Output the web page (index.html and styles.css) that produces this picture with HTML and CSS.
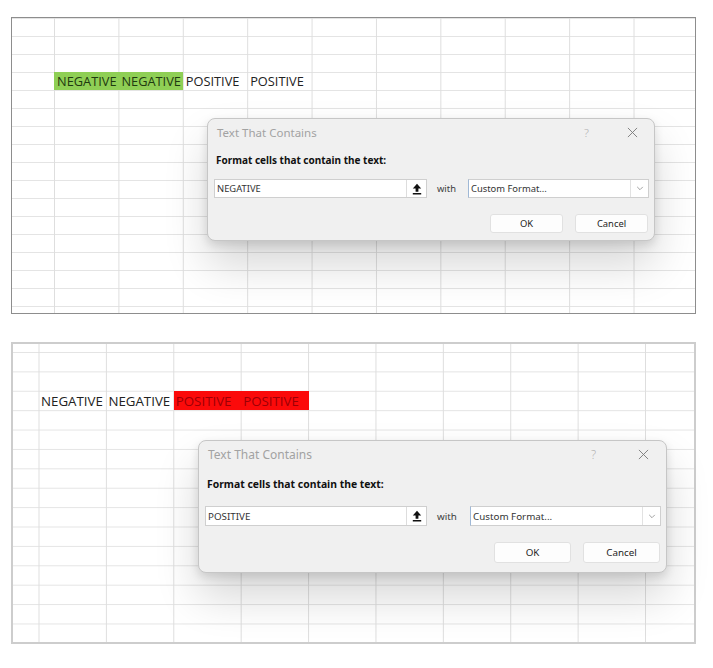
FILE: index.html
```html
<!DOCTYPE html>
<html lang="en">
<head>
<meta charset="utf-8">
<title>Text That Contains</title>
<link rel="stylesheet" href="styles.css">
</head>
<body>
<main class="page">
  <section class="sheet sheet--top">
    <div class="cells">
      <div class="cell cell--green">NEGATIVE</div>
      <div class="cell cell--green">NEGATIVE</div>
      <div class="cell">POSITIVE</div>
      <div class="cell">POSITIVE</div>
    </div>
    <div class="dialog dialog--top">
      <div class="titlebar">
        <span class="title">Text That Contains</span>
        <span class="help">?</span>
        <svg class="close" viewBox="0 0 12 12"><path d="M1 1 L11 11 M11 1 L1 11"/></svg>
      </div>
      <div class="label">Format cells that contain the text:</div>
      <div class="fields">
        <div class="input">
          <span class="input-text">NEGATIVE</span>
          <span class="collapse"><svg viewBox="0 0 10 12"><path class="fill" d="M5 0.8 L9.2 5.6 H6.4 V8.8 H3.6 V5.6 H0.8 Z"/><rect class="fill" x="0.8" y="10" width="8.4" height="1.5"/></svg></span>
        </div>
        <span class="with">with</span>
        <div class="select">
          <span class="select-text">Custom Format...</span>
          <span class="chev"><svg viewBox="0 0 10 6"><path d="M1.5 1 L5 4.5 L8.5 1"/></svg></span>
        </div>
      </div>
      <div class="buttons">
        <button class="btn">OK</button>
        <button class="btn">Cancel</button>
      </div>
    </div>
  </section>

  <section class="sheet sheet--bottom">
    <div class="cells">
      <div class="cell">NEGATIVE</div>
      <div class="cell">NEGATIVE</div>
      <div class="cell cell--red">POSITIVE</div>
      <div class="cell cell--red">POSITIVE</div>
    </div>
    <div class="dialog dialog--bottom">
      <div class="titlebar">
        <span class="title">Text That Contains</span>
        <span class="help">?</span>
        <svg class="close" viewBox="0 0 12 12"><path d="M1 1 L11 11 M11 1 L1 11"/></svg>
      </div>
      <div class="label">Format cells that contain the text:</div>
      <div class="fields">
        <div class="input">
          <span class="input-text">POSITIVE</span>
          <span class="collapse"><svg viewBox="0 0 10 12"><path class="fill" d="M5 0.8 L9.2 5.6 H6.4 V8.8 H3.6 V5.6 H0.8 Z"/><rect class="fill" x="0.8" y="10" width="8.4" height="1.5"/></svg></span>
        </div>
        <span class="with">with</span>
        <div class="select">
          <span class="select-text">Custom Format...</span>
          <span class="chev"><svg viewBox="0 0 10 6"><path d="M1.5 1 L5 4.5 L8.5 1"/></svg></span>
        </div>
      </div>
      <div class="buttons">
        <button class="btn">OK</button>
        <button class="btn">Cancel</button>
      </div>
    </div>
  </section>
</main>
</body>
</html>
```
FILE: styles.css
```css
* { box-sizing: border-box; }

html, body {
  margin: 0;
  padding: 0;
  background: #ffffff;
}

.page {
  padding: 17px 0 0 11px;
  display: flex;
  flex-direction: column;
  gap: 28px;
}

/* ---------- spreadsheet panels ---------- */
.sheet {
  position: relative;
  width: 685px;
  background-color: #ffffff;
  font-family: "Open Sans", "Liberation Sans", sans-serif;
  color: #222222;
}

.sheet--top {
  height: 297px;
  border: 1px solid #8d8d8d;
  background-image:
    linear-gradient(to right, #dedede 1px, transparent 1px),
    linear-gradient(to bottom, #e4e4e4 1px, transparent 1px);
  background-size: 64.4px 100%, 100% 18px;
  background-position: 42px 0, 0 0;
}

.sheet--bottom {
  height: 302px;
  border: 2px solid #cdcdcd;
  background-image:
    linear-gradient(to right, #dedede 1px, transparent 1px),
    linear-gradient(to bottom, #e4e4e4 1px, transparent 1px);
  background-size: 67.4px 100%, 100% 19.4px;
  background-position: 25.5px 0, 0 8px;
}

.cells {
  display: flex;
  font-weight: 500;
}

.sheet--top .cells {
  margin: 54px 0 0 42px;
  height: 18px;
  font-size: 12.8px;
}

.sheet--bottom .cells {
  margin: 47px 0 0 26px;
  height: 19px;
  font-size: 13.3px;
}

.cell {
  width: 64.4px;
  height: 100%;
  display: flex;
  align-items: center;
  padding-left: 3px;
  white-space: nowrap;
  overflow: visible;
}

.sheet--bottom .cell {
  width: 67.4px;
  padding-left: 2px;
}

.cell--green {
  background: #8fcf55;
  color: #1f3a10;
}

.cell--red {
  background: #fb0a0a;
  color: #9c0006;
}

/* ---------- dialog ---------- */
.dialog {
  position: absolute;
  display: flex;
  flex-direction: column;
  background: #f0f0f0;
  border: 1px solid #c6c6c6;
  border-radius: 8px;
  font-family: "Noto Sans", "Open Sans", sans-serif;
  color: #1e1e1e;
  box-shadow: 0 24px 44px rgba(0, 0, 0, 0.16), 0 4px 10px rgba(0, 0, 0, 0.12);
}

.dialog--top {
  left: 195px;
  top: 100px;
  width: 448px;
  height: 123px;
  --title: 11.5px;
  --label: 10px;
  --text: 9.4px;
  --label-gap: 7px;
  --field-gap: 12px;
  --field-h: 19px;
  --input-w: 213px;
  --select-w: 181px;
  --btn-gap: 16px;
  --btn-w: 73px;
  --btn-h: 19px;
  --close-pad: 16px;
  --help-gap: 38px;
}

.dialog--bottom {
  left: 185px;
  top: 96px;
  width: 469px;
  height: 133px;
  --title: 12px;
  --label: 10.4px;
  --text: 9.8px;
  --label-gap: 9px;
  --field-gap: 15px;
  --field-h: 20px;
  --input-w: 222px;
  --select-w: 191px;
  --btn-gap: 16px;
  --btn-w: 77px;
  --btn-h: 21px;
  --close-pad: 17px;
  --help-gap: 42px;
}

.titlebar {
  height: 27px;
  display: flex;
  align-items: center;
  padding: 0 var(--close-pad) 0 9px;
}

.title {
  flex: 1;
  font-size: var(--title);
  color: #a2a2a2;
}

.help {
  font-size: var(--title);
  color: #b0b0b0;
  margin-right: var(--help-gap);
  font-weight: 300;
}

.close {
  width: 11px;
  height: 11px;
}

.close path {
  stroke: #7a7a7a;
  stroke-width: 1;
  fill: none;
}

.label {
  margin: var(--label-gap) 0 0 8px;
  line-height: 14px;
  font-size: var(--label);
  font-weight: 700;
  color: #111111;
}

.fields {
  margin-top: var(--field-gap);
  height: var(--field-h);
  display: flex;
  align-items: stretch;
  padding: 0 5px 0 6px;
}

.input {
  width: var(--input-w);
  display: flex;
  background: #ffffff;
  border: 1px solid #cfcfcf;
}

.input-text {
  flex: 1;
  display: flex;
  align-items: center;
  padding-left: 2px;
  font-size: var(--text);
  color: #333333;
}

.collapse {
  width: 20px;
  display: flex;
  align-items: center;
  justify-content: center;
  border-left: 1px solid #dddddd;
}

.collapse svg {
  width: 10px;
  height: 12px;
}

.fill {
  fill: #111111;
}

.with {
  display: flex;
  align-items: center;
  margin-left: 10px;
  font-size: var(--text);
  color: #3c3c3c;
}

.select {
  width: var(--select-w);
  margin-left: auto;
  display: flex;
  background: #ffffff;
  border: 1px solid #cfcfcf;
  border-left: 1px solid #9fb8d6;
}

.select-text {
  flex: 1;
  display: flex;
  align-items: center;
  padding-left: 2px;
  font-size: var(--text);
  color: #333333;
}

.chev {
  width: 18px;
  display: flex;
  align-items: center;
  justify-content: center;
  border-left: 1px solid #e2e2e2;
}

.chev svg {
  width: 8px;
  height: 5px;
}

.chev path {
  fill: none;
  stroke: #8a8a8a;
  stroke-width: 1;
}

.buttons {
  margin-top: var(--btn-gap);
  display: flex;
  justify-content: flex-end;
  gap: 12px;
  padding-right: 6px;
}

.btn {
  width: var(--btn-w);
  height: var(--btn-h);
  padding: 0;
  background: #fdfdfd;
  border: 1px solid #e1e1e1;
  border-radius: 3px;
  font-family: "Noto Sans", "Open Sans", sans-serif;
  font-size: var(--text);
  color: #1e1e1e;
}
```
